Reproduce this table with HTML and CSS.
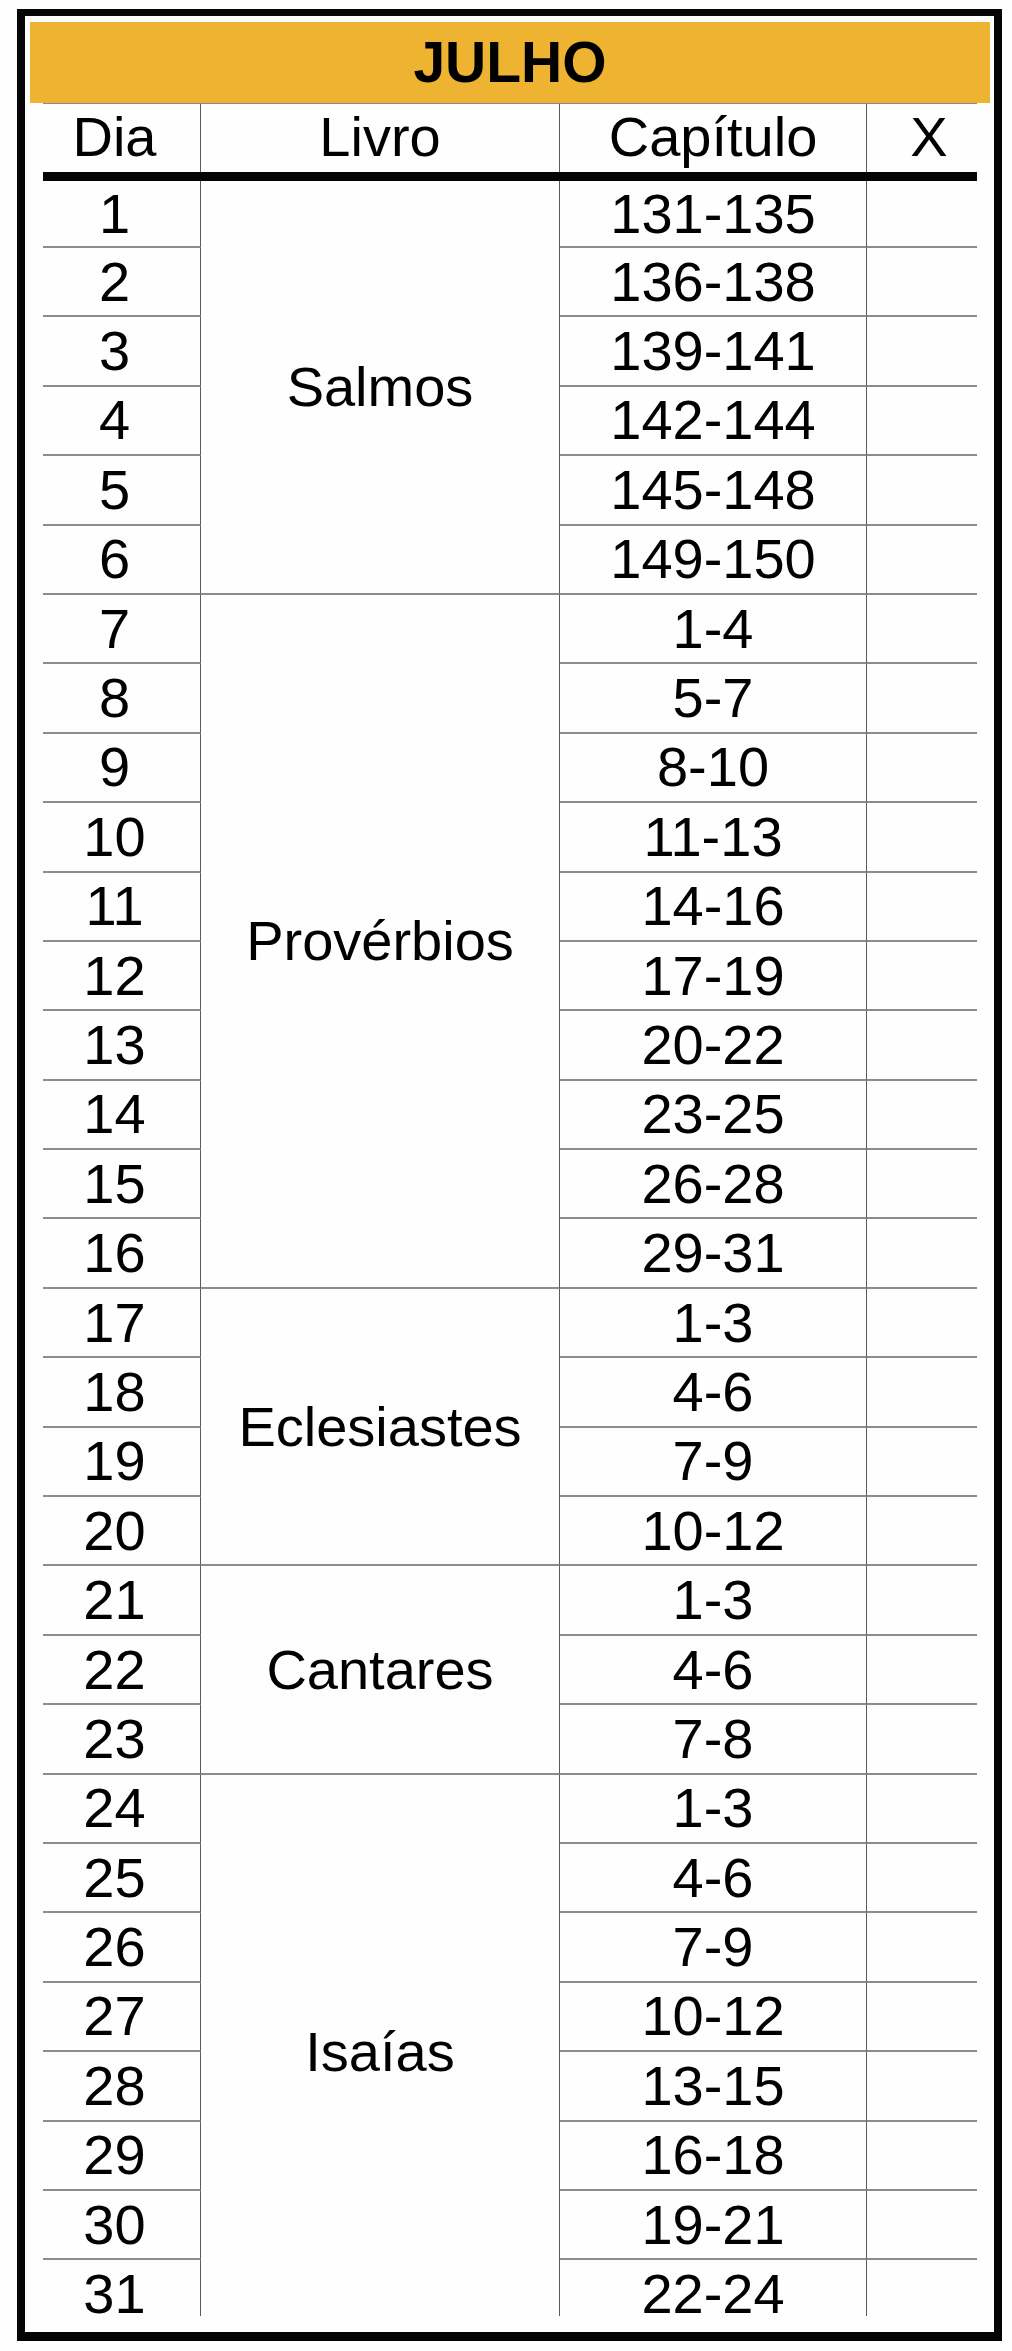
FILE: index.html
```html
<!DOCTYPE html>
<html lang="pt">
<head>
<meta charset="utf-8">
<title>Julho</title>
<link rel="stylesheet" href="styles.css">
</head>
<body>
<div class="frame">
  <div class="title">JULHO</div>
  <div class="head">
    <div class="hc d">Dia</div>
    <div class="hc l">Livro</div>
    <div class="hc c">Capítulo</div>
    <div class="hc x">X</div>
  </div>
  <div class="grid">
    <div class="d">1</div><div class="l s6">Salmos</div><div class="c">131-135</div><div class="x"></div>
    <div class="d">2</div><div class="c">136-138</div><div class="x"></div>
    <div class="d">3</div><div class="c">139-141</div><div class="x"></div>
    <div class="d">4</div><div class="c">142-144</div><div class="x"></div>
    <div class="d">5</div><div class="c">145-148</div><div class="x"></div>
    <div class="d">6</div><div class="c">149-150</div><div class="x"></div>
    <div class="d">7</div><div class="l s10">Provérbios</div><div class="c">1-4</div><div class="x"></div>
    <div class="d">8</div><div class="c">5-7</div><div class="x"></div>
    <div class="d">9</div><div class="c">8-10</div><div class="x"></div>
    <div class="d">10</div><div class="c">11-13</div><div class="x"></div>
    <div class="d">11</div><div class="c">14-16</div><div class="x"></div>
    <div class="d">12</div><div class="c">17-19</div><div class="x"></div>
    <div class="d">13</div><div class="c">20-22</div><div class="x"></div>
    <div class="d">14</div><div class="c">23-25</div><div class="x"></div>
    <div class="d">15</div><div class="c">26-28</div><div class="x"></div>
    <div class="d">16</div><div class="c">29-31</div><div class="x"></div>
    <div class="d">17</div><div class="l s4">Eclesiastes</div><div class="c">1-3</div><div class="x"></div>
    <div class="d">18</div><div class="c">4-6</div><div class="x"></div>
    <div class="d">19</div><div class="c">7-9</div><div class="x"></div>
    <div class="d">20</div><div class="c">10-12</div><div class="x"></div>
    <div class="d">21</div><div class="l s3">Cantares</div><div class="c">1-3</div><div class="x"></div>
    <div class="d">22</div><div class="c">4-6</div><div class="x"></div>
    <div class="d">23</div><div class="c">7-8</div><div class="x"></div>
    <div class="d">24</div><div class="l s8 lastgroup">Isaías</div><div class="c">1-3</div><div class="x"></div>
    <div class="d">25</div><div class="c">4-6</div><div class="x"></div>
    <div class="d">26</div><div class="c">7-9</div><div class="x"></div>
    <div class="d">27</div><div class="c">10-12</div><div class="x"></div>
    <div class="d">28</div><div class="c">13-15</div><div class="x"></div>
    <div class="d">29</div><div class="c">16-18</div><div class="x"></div>
    <div class="d">30</div><div class="c">19-21</div><div class="x"></div>
    <div class="d last">31</div><div class="c last">22-24</div><div class="x last"></div>
  </div>
</div>
</body>
</html>
```

FILE: styles.css
```css
html, body {
  margin: 0;
  padding: 0;
  background: #fefefe;
}

body {
  font-family: "Liberation Sans", Arial, sans-serif;
  color: #000;
}

.frame {
  box-sizing: border-box;
  width: 985px;
  height: 2332px;
  margin: 9px 0 0 17px;
  border-style: solid;
  border-color: #050508;
  border-width: 7px 8px 9px 8px;
  background: #fefefe;
}

.title {
  margin: 6px 4px 0 5px;
  height: 81px;
  background: #edb331;
  font-weight: bold;
  font-size: 57px;
  line-height: 81px;
  text-align: center;
}

.head,
.grid {
  display: grid;
  grid-template-columns: 158px 359px 307px 110px;
  width: 934px;
  margin-left: 18px;
}

.head {
  height: 78px;
  box-sizing: border-box;
  border-top: 1px solid #8a8a8a;
  border-bottom: 9px solid #050508;
}

.hc {
  display: flex;
  align-items: center;
  justify-content: center;
  box-sizing: border-box;
  font-size: 56px;
  line-height: 1;
  padding-bottom: 2px;
}

.grid {
  grid-template-rows: 67px repeat(29, 69.4px) 55.4px;
}

.grid > div {
  display: flex;
  align-items: center;
  justify-content: center;
  box-sizing: border-box;
  font-size: 56px;
  line-height: 1;
  border-bottom: 2px solid #8c8c8c;
}

.d { grid-column: 1; border-right: 1px solid #5a5a5a; padding-right: 14px; }
.l { grid-column: 2; border-right: 1px solid #5a5a5a; }
.c { grid-column: 3; border-right: 1px solid #5a5a5a; }
.x { grid-column: 4; padding-left: 14px; }

.s3 { grid-row: span 3; }
.s4 { grid-row: span 4; }
.s6 { grid-row: span 6; }
.s8 { grid-row: span 8; }
.s10 { grid-row: span 10; }

.grid > .last,
.grid > .lastgroup {
  border-bottom: none;
  padding-top: 12px;
}

.grid > .lastgroup {
  padding-top: 14px;
}
```
